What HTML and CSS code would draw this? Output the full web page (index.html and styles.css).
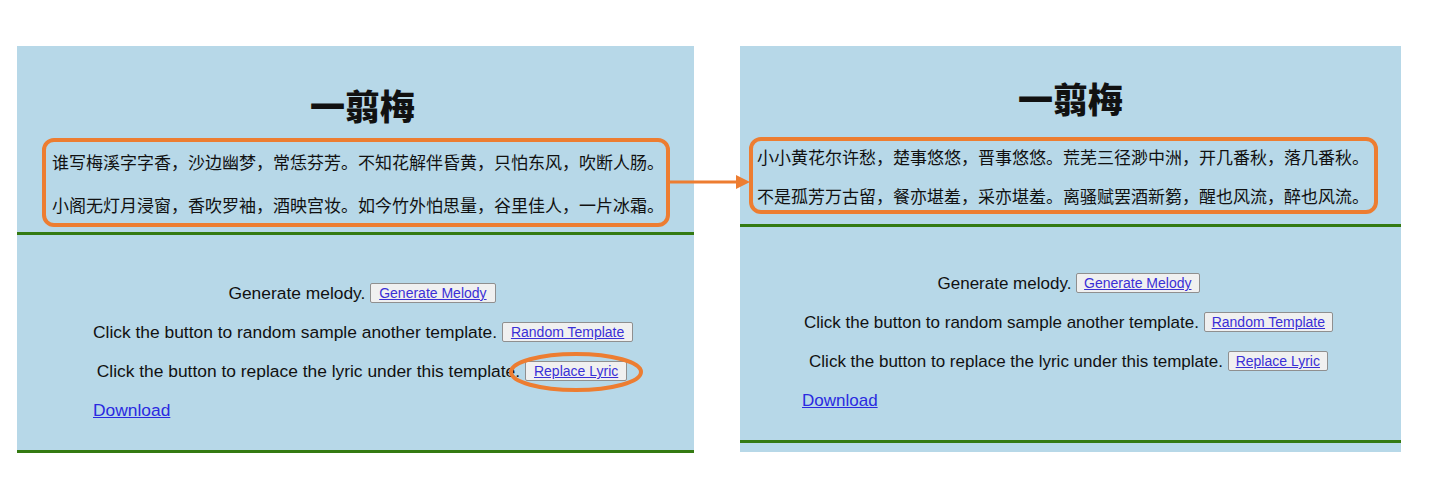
FILE: index.html
```html
<!DOCTYPE html>
<html lang="zh-CN">
<head>
<meta charset="utf-8">
<title>一翦梅</title>
<link rel="stylesheet" href="styles.css">
</head>
<body>
<div class="stage">
  <section class="panel panel-a">
    <h1 class="title">一翦梅</h1>
    <div class="lyrics">
      <p class="lyric">谁写梅溪字字香，沙边幽梦，常恁芬芳。不知花解伴昏黄，只怕东风，吹断人肠。</p>
      <p class="lyric">小阁无灯月浸窗，香吹罗袖，酒映宫妆。如今竹外怕思量，谷里佳人，一片冰霜。</p>
    </div>
    <hr class="rule">
    <div class="controls">
      <p class="row">Generate melody. <button class="btn"><a href="#">Generate Melody</a></button></p>
      <p class="row">Click the button to random sample another template. <button class="btn"><a href="#">Random Template</a></button></p>
      <p class="row">Click the button to replace the lyric under this template. <button class="btn"><a href="#">Replace Lyric</a></button></p>
      <p class="row row-left"><a class="link" href="#">Download</a></p>
    </div>
    <hr class="rule rule-end">
  </section>
  <section class="panel panel-b">
    <h1 class="title">一翦梅</h1>
    <div class="lyrics">
      <p class="lyric">小小黄花尔许愁，楚事悠悠，晋事悠悠。荒芜三径渺中洲，开几番秋，落几番秋。</p>
      <p class="lyric">不是孤芳万古留，餐亦堪羞，采亦堪羞。离骚赋罢酒新篘，醒也风流，醉也风流。</p>
    </div>
    <hr class="rule">
    <div class="controls">
      <p class="row">Generate melody. <button class="btn"><a href="#">Generate Melody</a></button></p>
      <p class="row">Click the button to random sample another template. <button class="btn"><a href="#">Random Template</a></button></p>
      <p class="row">Click the button to replace the lyric under this template. <button class="btn"><a href="#">Replace Lyric</a></button></p>
      <p class="row row-left"><a class="link" href="#">Download</a></p>
    </div>
    <hr class="rule rule-end">
  </section>
  <svg class="arrow" width="84" height="20" viewBox="0 0 84 20" aria-hidden="true">
    <line x1="0" y1="10" x2="70" y2="10" stroke="#ED7D31" stroke-width="3"/>
    <polygon points="68,3 82,10 68,17" fill="#ED7D31"/>
  </svg>
  <svg class="ring" width="140" height="46" viewBox="0 0 140 46" aria-hidden="true">
    <ellipse cx="70" cy="23" rx="65" ry="18" fill="none" stroke="#ED7D31" stroke-width="4"/>
  </svg>
</div>
</body>
</html>
```
FILE: styles.css
```css
* { box-sizing: border-box; }
html, body { margin: 0; padding: 0; background: #ffffff; }
body { font-family: "Liberation Sans", Arial, "Noto Sans CJK SC", sans-serif; color: #111; }

.stage {
  position: relative;
  display: flex;
  align-items: flex-start;
  gap: 46px;
  padding: 46px 0 0 17px;
}

.panel {
  background: #b7d8e8;
  display: flex;
  flex-direction: column;
}
.panel-a { width: 677px; height: 407px; padding-top: 39px; }
.panel-b { width: 661px; height: 406px; padding-top: 32px; }

.title {
  margin: 0;
  text-align: center;
  font-family: "Noto Sans CJK SC", "Noto Sans CJK JP", sans-serif;
  font-weight: 900;
  font-size: 35px;
  line-height: 40px;
  color: #111;
}
.panel-a .title { padding-left: 14px; }

.lyrics {
  border: 4px solid #ED7D31;
  border-radius: 12px;
  display: flex;
  flex-direction: column;
}
.panel-a .lyrics { margin: 13px 0 0 25px; width: 628px; padding: 8px 0 6px 6px; gap: 19px; }
.panel-b .lyrics { margin: 19px 0 0 9px; width: 629px; padding: 4px 0 2px 4px; gap: 15px; }

.lyric {
  margin: 0;
  font-family: "Noto Sans CJK SC", sans-serif;
  font-size: 17px;
  line-height: 24px;
  white-space: nowrap;
  color: #111;
}

.rule {
  border: 0;
  height: 3px;
  background: #347a12;
  margin: 0;
  width: 100%;
}
.panel-a .rule { margin-top: 5px; }
.panel-b .rule { margin-top: 10px; }
.panel .rule-end { margin-top: 0; }

.controls {
  display: flex;
  flex-direction: column;
  gap: 15px;
}
.panel-a .controls { margin: 46px 0 28px 76px; width: 538px; }
.panel-b .controls { margin: 45px 0 27px 62px; width: 533px; }

.row {
  margin: 0;
  text-align: center;
  font-size: 17.4px;
  line-height: 24px;
  white-space: nowrap;
}
.panel-b .row { font-size: 17px; }
.row-left { text-align: left; }

.btn {
  font-family: "Liberation Sans", Arial, sans-serif;
  font-size: 14px;
  line-height: 16px;
  padding: 1px 8px;
  background: #f0f0f0;
  border: 1px solid #8f8f8f;
  border-radius: 2px;
  vertical-align: 1px;
}
.panel-b .btn { padding: 1px 7px; }
.btn a { color: #3a2fd6; text-decoration: underline; }
.link { color: #2a2ae0; text-decoration: underline; }

.arrow { position: absolute; left: 668px; top: 172px; }
.ring { position: absolute; left: 506px; top: 349px; }
```
